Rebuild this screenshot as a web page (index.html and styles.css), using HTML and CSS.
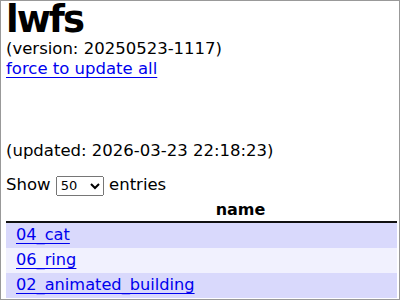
FILE: index.html
```html
<!DOCTYPE html>
<html>
<head>
<meta charset="utf-8">
<link rel="stylesheet" href="styles.css">
</head>
<body>
<h1 class="title">lwfs</h1>
<div class="version">(version: 20250523-1117)</div>
<div><a class="link" href="#">force to update all</a></div>
<div class="spacer"></div>
<div class="updated">(updated: 2026-03-23 22:18:23)</div>
<div class="length">Show <select class="sel"><option>50</option></select> entries</div>
<table class="list">
<thead><tr><th>name</th></tr></thead>
<tbody>
<tr class="odd"><td><a class="link" href="#">04_cat</a></td></tr>
<tr class="even"><td><a class="link" href="#">06_ring</a></td></tr>
<tr class="odd"><td><a class="link" href="#">02_animated_building</a></td></tr>
</tbody>
</table>
</body>
</html>
```
FILE: styles.css
```css
html {
  border: 1px solid #999;
  height: 298px;
  overflow: hidden;
}
body {
  margin: 0 2px 0 5px;
  font-family: "DejaVu Sans", Verdana, sans-serif;
  font-size: 16.5px;
  line-height: 20px;
  color: #000;
}
.title {
  font-size: 37px;
  line-height: 38px;
  letter-spacing: -2px;
  margin: 0;
  font-weight: bold;
}
.link {
  color: #00e;
  text-decoration-skip-ink: none;
  text-underline-offset: 3px;
}
.spacer {
  height: 62px;
}
.updated {
  margin-bottom: 14px;
}
.length {
  margin-bottom: 4px;
}
.sel {
  font-family: "DejaVu Sans", sans-serif;
  font-size: 13px;
  height: 20px;
  width: 48px;
}
.list {
  width: 100%;
  border-collapse: collapse;
}
.list th {
  font-size: 16px;
  font-weight: bold;
  border-bottom: 2px solid #111;
  padding: 0 10px 1px 88px;
}
.list td {
  font-size: 16.2px;
  padding: 2px 10px 3px;
}
.odd { background: #d9d9fc; }
.even { background: #f1f1fe; }
```
